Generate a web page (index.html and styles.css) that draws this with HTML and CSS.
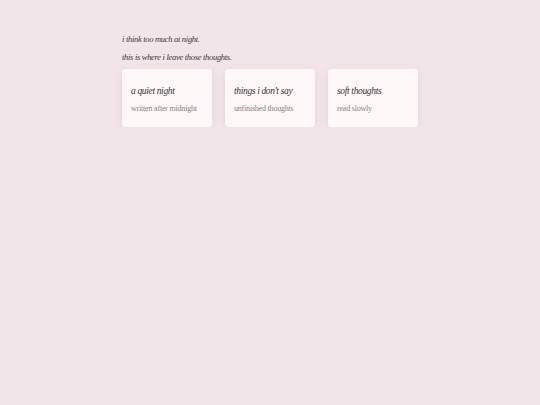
FILE: index.html
```html
<!DOCTYPE html>
<html lang="en">
<head>
  <meta charset="UTF-8" />
  <meta name="viewport" content="width=device-width, initial-scale=1.0" />
  <title>soft thoughts</title>
  <link rel="stylesheet" href="styles.css">
</head>
<body>

  <main class="page">
    <p class="intro">i think too much at night.</p>
    <p class="intro">this is where i leave those thoughts.</p>

    <div class="cards">
      <div class="card">
        <h2>a quiet night</h2>
        <p>written after midnight</p>
      </div>
      <div class="card">
        <h2>things i don't say</h2>
        <p>unfinished thoughts</p>
      </div>
      <div class="card">
        <h2>soft thoughts</h2>
        <p>read slowly</p>
      </div>
    </div>
  </main>

</body>
</html>
```

FILE: styles.css
```css
body {
  margin: 0;
  background-color: #f2e5ea;
  font-family: "Liberation Serif", "DejaVu Serif", serif;
  color: #3a3336;
}

.page {
  width: 296px;
  margin: 0 auto;
  padding-top: 34px;
}

.intro {
  margin: 0 0 7px;
  font-size: 8.5px;
  line-height: 11px;
  letter-spacing: -0.3px;
  font-style: italic;
  color: #3d3438;
}

.intro:last-of-type {
  margin-bottom: 6px;
}

.cards {
  display: flex;
  gap: 13px;
}

.card {
  flex: 1;
  height: 58px;
  box-sizing: border-box;
  padding: 16px 9px 0;
  background-color: #fff8f8;
  border-radius: 3px;
  box-shadow: 0 2px 8px rgba(120, 80, 95, 0.12);
}

.card h2 {
  margin: 0 0 5px;
  font-size: 9.5px;
  line-height: 13px;
  letter-spacing: -0.35px;
  font-weight: normal;
  font-style: italic;
  color: #3a3336;
}

.card p {
  margin: 0;
  font-size: 8px;
  line-height: 11px;
  letter-spacing: -0.2px;
  color: #8a8285;
}
```
